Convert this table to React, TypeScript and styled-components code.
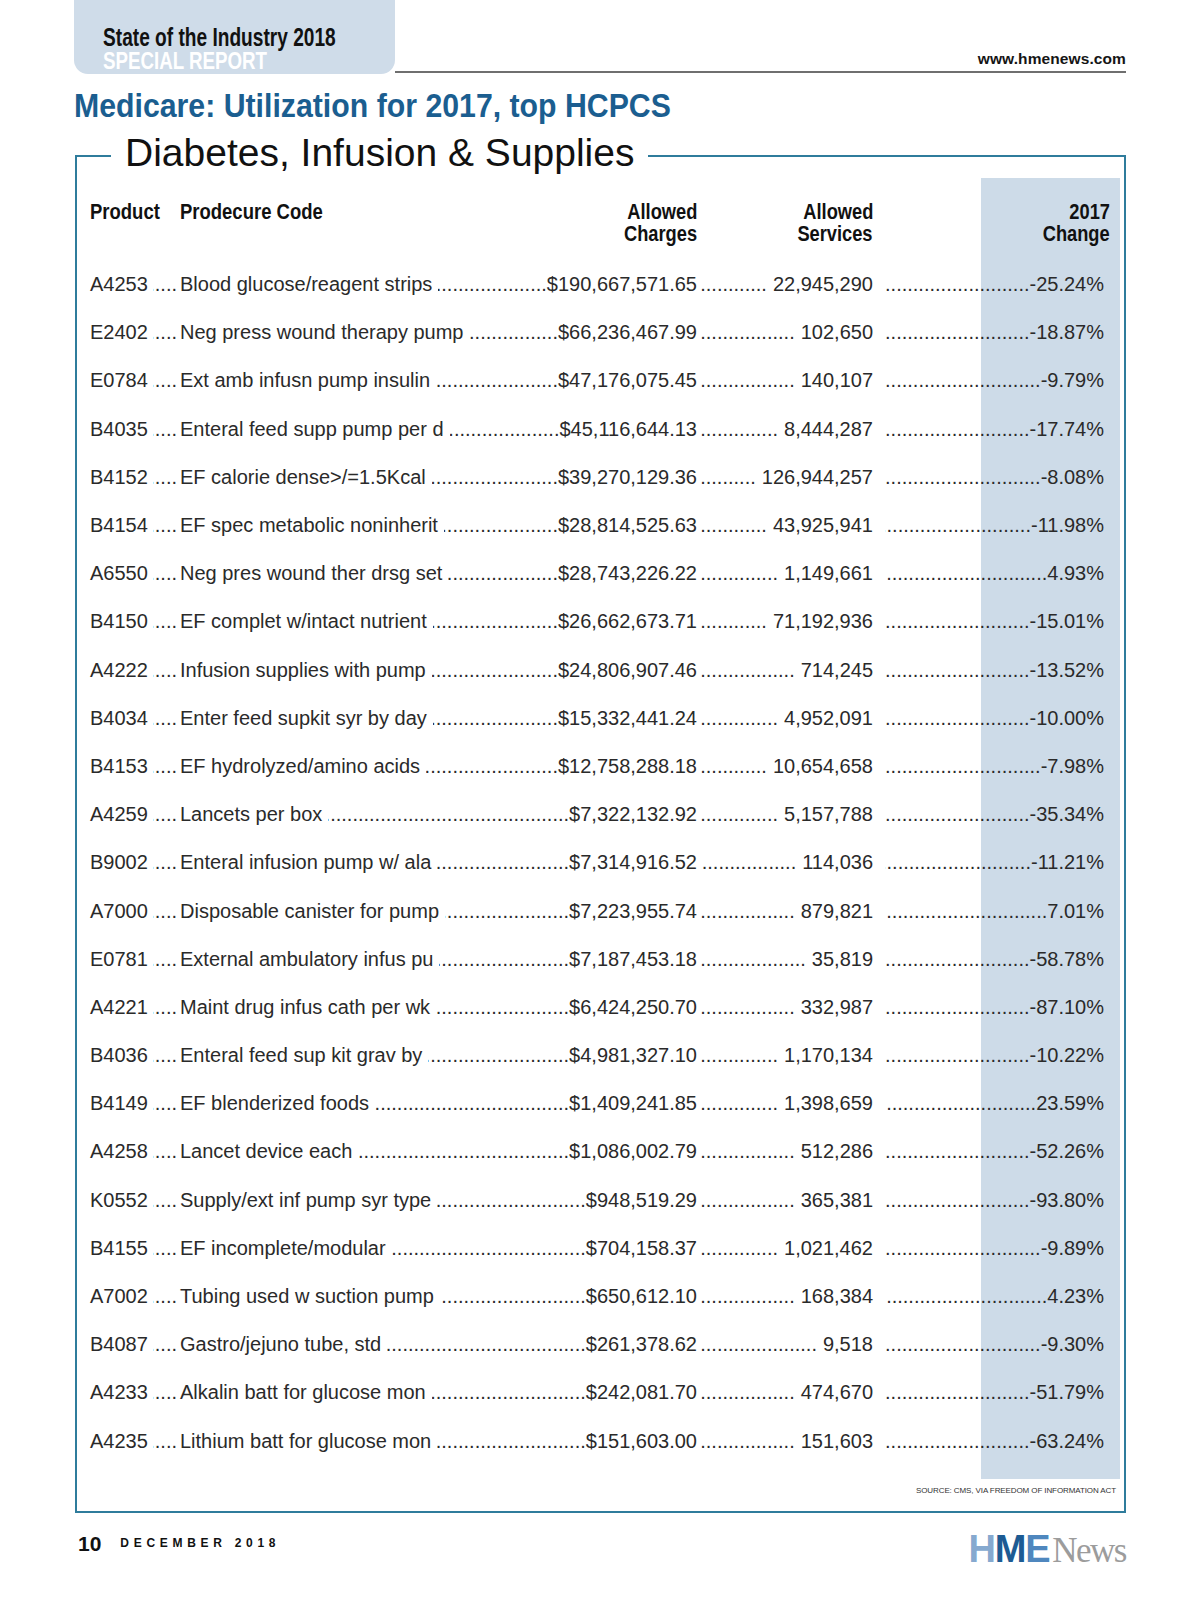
import React from "react"
import styled, { createGlobalStyle } from "styled-components"

const GlobalStyle = createGlobalStyle`
  html, body {
    margin: 0;
    padding: 0;
    background: #fff;
  }
  body {
    font-family: "Liberation Sans", Arial, sans-serif;
    color: #1c1c1c;
  }
`

const Page = styled.div`
  width: 1200px;
  height: 1606px;
  box-sizing: border-box;
  padding: 0 74px;
`

const TopBar = styled.header`
  display: flex;
  align-items: flex-start;
  height: 74px;
`

const Tab = styled.div`
  width: 321px;
  height: 74px;
  box-sizing: border-box;
  padding: 26px 0 0 29px;
  background: #cfdce9;
  border-radius: 0 0 14px 14px;
  overflow: hidden;
`

const Squeeze = styled.span<{ $x: number; $right?: boolean }>`
  display: inline-block;
  white-space: nowrap;
  transform: scaleX(${(p) => p.$x});
  transform-origin: ${(p) => (p.$right ? "right" : "left")} center;
`

const TabLine = styled.div<{ $light?: boolean }>`
  font-weight: bold;
  font-size: ${(p) => (p.$light ? 24 : 25)}px;
  line-height: 23px;
  color: ${(p) => (p.$light ? "#ffffff" : "#111")};
  white-space: nowrap;
`

const Rule = styled.div`
  flex: 1;
  height: 71px;
  border-bottom: 2px solid #6f6f6f;
  display: flex;
  justify-content: flex-end;
  align-items: flex-end;
`

const Site = styled.span`
  font-weight: bold;
  font-size: 15.5px;
  line-height: 18px;
  padding-bottom: 3px;
  color: #151515;
  letter-spacing: 0.1px;
`

const Title = styled.h1`
  margin: 14px 0 0;
  font-size: 34px;
  line-height: 34px;
  font-weight: bold;
  color: #1b5e90;
`

const Box = styled.fieldset`
  margin: 11px 0 0 1px;
  padding: 0 0 15px;
  border: 2px solid #2f7c9c;
  min-width: 0;
`

const Heading = styled.legend`
  margin-left: 34px;
  padding: 0 14px 6px;
  font-size: 39px;
  line-height: 39px;
  color: #111;
  white-space: nowrap;
`

const TableArea = styled.div`
  padding: 23px 0 14px 13px;
  background: linear-gradient(
    to right,
    transparent 904px,
    #cddbe8 904px,
    #cddbe8 1043px,
    transparent 1043px
  );
`

const HeadRow = styled.div`
  display: grid;
  grid-template-columns: 90px 400px 117px 176px 237px;
  margin-bottom: 15px;
  font-weight: bold;
  font-size: 22px;
  line-height: 22px;
  color: #111;
`

const HeadCell = styled.div<{ $right?: boolean }>`
  text-align: ${(p) => (p.$right ? "right" : "left")};
`

const Row = styled.div`
  display: grid;
  grid-template-columns: 90px 517px 176px 237px;
  height: 48.2px;
  align-items: center;
  font-size: 20px;
  line-height: 24px;
  color: #2a2a2a;
  white-space: nowrap;
`

const Cell = styled.div`
  display: flex;
  align-items: baseline;
  min-width: 0;
`

const Leader = styled.span<{ $l?: number; $r?: number }>`
  flex: 1 1 0;
  min-width: 0;
  overflow: hidden;
  white-space: nowrap;
  direction: rtl;
  margin-left: ${(p) => p.$l ?? 0}px;
  margin-right: ${(p) => p.$r ?? 0}px;
  &::before {
    content: "........................................................................................................................";
  }
`

const Value = styled.span<{ $pad?: number }>`
  padding-right: ${(p) => p.$pad ?? 0}px;
`

const Source = styled.div`
  margin-top: 6px;
  padding-right: 8px;
  text-align: right;
  font-size: 8px;
  line-height: 11px;
  color: #333;
  letter-spacing: -0.1px;
`

const Footer = styled.footer`
  display: flex;
  justify-content: space-between;
  align-items: flex-start;
`

const Folio = styled.div`
  display: flex;
  align-items: center;
  gap: 19px;
  margin-top: 19px;
  padding-left: 4px;
`

const PageNum = styled.span`
  font-weight: bold;
  font-size: 21px;
  line-height: 23px;
  color: #111;
`

const Issue = styled.span`
  font-weight: bold;
  font-size: 12px;
  letter-spacing: 4.7px;
  color: #111;
`

const Logo = styled.div`
  display: flex;
  align-items: baseline;
  margin-top: 17px;
  line-height: 38px;
`

const LogoLetter = styled.span<{ $c: string }>`
  font-family: "Liberation Sans", Arial, sans-serif;
  font-weight: bold;
  font-size: 38px;
  letter-spacing: -1.2px;
  color: ${(p) => p.$c};
`

const LogoWord = styled.span`
  margin-left: 3px;
  font-family: "Liberation Serif", "Times New Roman", serif;
  font-size: 35px;
  letter-spacing: -1.5px;
  color: #9c9c9c;
`

type Item = [string, string, string, string, string]

const rows: Item[] = [
  ["A4253", "Blood glucose/reagent strips", "$190,667,571.65", "22,945,290", "-25.24%"],
  ["E2402", "Neg press wound therapy pump", "$66,236,467.99", "102,650", "-18.87%"],
  ["E0784", "Ext amb infusn pump insulin", "$47,176,075.45", "140,107", "-9.79%"],
  ["B4035", "Enteral feed supp pump per d", "$45,116,644.13", "8,444,287", "-17.74%"],
  ["B4152", "EF calorie dense>/=1.5Kcal", "$39,270,129.36", "126,944,257", "-8.08%"],
  ["B4154", "EF spec metabolic noninherit", "$28,814,525.63", "43,925,941", "-11.98%"],
  ["A6550", "Neg pres wound ther drsg set", "$28,743,226.22", "1,149,661", "4.93%"],
  ["B4150", "EF complet w/intact nutrient", "$26,662,673.71", "71,192,936", "-15.01%"],
  ["A4222", "Infusion supplies with pump", "$24,806,907.46", "714,245", "-13.52%"],
  ["B4034", "Enter feed supkit syr by day", "$15,332,441.24", "4,952,091", "-10.00%"],
  ["B4153", "EF hydrolyzed/amino acids", "$12,758,288.18", "10,654,658", "-7.98%"],
  ["A4259", "Lancets per box", "$7,322,132.92", "5,157,788", "-35.34%"],
  ["B9002", "Enteral infusion pump w/ ala", "$7,314,916.52", "114,036", "-11.21%"],
  ["A7000", "Disposable canister for pump", "$7,223,955.74", "879,821", "7.01%"],
  ["E0781", "External ambulatory infus pu", "$7,187,453.18", "35,819", "-58.78%"],
  ["A4221", "Maint drug infus cath per wk", "$6,424,250.70", "332,987", "-87.10%"],
  ["B4036", "Enteral feed sup kit grav by", "$4,981,327.10", "1,170,134", "-10.22%"],
  ["B4149", "EF blenderized foods", "$1,409,241.85", "1,398,659", "23.59%"],
  ["A4258", "Lancet device each", "$1,086,002.79", "512,286", "-52.26%"],
  ["K0552", "Supply/ext inf pump syr type", "$948,519.29", "365,381", "-93.80%"],
  ["B4155", "EF incomplete/modular", "$704,158.37", "1,021,462", "-9.89%"],
  ["A7002", "Tubing used w suction pump", "$650,612.10", "168,384", "4.23%"],
  ["B4087", "Gastro/jejuno tube, std", "$261,378.62", "9,518", "-9.30%"],
  ["A4233", "Alkalin batt for glucose mon", "$242,081.70", "474,670", "-51.79%"],
  ["A4235", "Lithium batt for glucose mon", "$151,603.00", "151,603", "-63.24%"],
]

export default function App() {
  return (
    <Page>
      <GlobalStyle />
      <TopBar>
        <Tab>
          <TabLine>
            <Squeeze $x={0.765}>State of the Industry 2018</Squeeze>
          </TabLine>
          <TabLine $light>
            <Squeeze $x={0.78}>SPECIAL REPORT</Squeeze>
          </TabLine>
        </Tab>
        <Rule>
          <Site>www.hmenews.com</Site>
        </Rule>
      </TopBar>

      <Title>
        <Squeeze $x={0.89}>Medicare: Utilization for 2017, top HCPCS</Squeeze>
      </Title>

      <Box>
        <Heading>Diabetes, Infusion &amp; Supplies</Heading>
        <TableArea>
          <HeadRow>
            <HeadCell>
              <Squeeze $x={0.84}>Product</Squeeze>
            </HeadCell>
            <HeadCell>
              <Squeeze $x={0.84}>Prodecure Code</Squeeze>
            </HeadCell>
            <HeadCell $right>
              <Squeeze $x={0.83} $right>Allowed</Squeeze>
              <br />
              <Squeeze $x={0.83} $right>Charges</Squeeze>
            </HeadCell>
            <HeadCell $right>
              <Squeeze $x={0.83} $right>Allowed</Squeeze>
              <br />
              <Squeeze $x={0.83} $right>Services</Squeeze>
            </HeadCell>
            <HeadCell $right>
              <Squeeze $x={0.83} $right>2017</Squeeze>
              <br />
              <Squeeze $x={0.83} $right>Change</Squeeze>
            </HeadCell>
          </HeadRow>

          {rows.map(([code, desc, charges, services, change]) => (
            <Row key={code}>
              <Cell>
                <span>{code}</span>
                <Leader $l={5} $r={3} />
              </Cell>
              <Cell>
                <span>{desc}</span>
                <Leader $l={6} />
                <Value>{charges}</Value>
              </Cell>
              <Cell>
                <Leader $l={4} $r={6} />
                <Value>{services}</Value>
              </Cell>
              <Cell>
                <Leader $l={12} />
                <Value $pad={6}>{change}</Value>
              </Cell>
            </Row>
          ))}
        </TableArea>
        <Source>SOURCE: CMS, VIA FREEDOM OF INFORMATION ACT</Source>
      </Box>

      <Footer>
        <Folio>
          <PageNum>10</PageNum>
          <Issue>DECEMBER 2018</Issue>
        </Folio>
        <Logo>
          <LogoLetter $c="#86a9cf">H</LogoLetter>
          <LogoLetter $c="#1d5b93">M</LogoLetter>
          <LogoLetter $c="#4f87be">E</LogoLetter>
          <LogoWord>News</LogoWord>
        </Logo>
      </Footer>
    </Page>
  )
}
